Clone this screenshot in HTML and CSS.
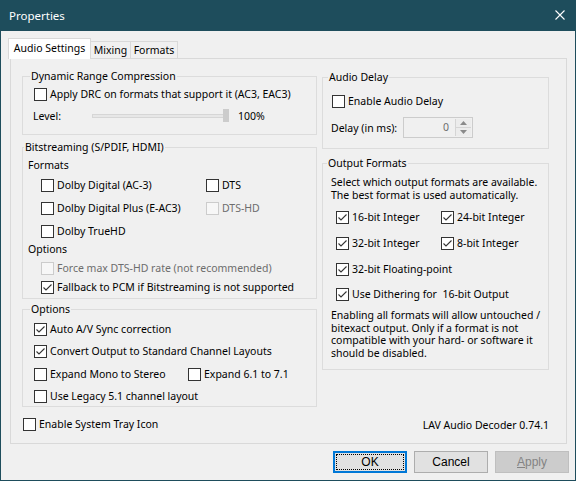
FILE: index.html
```html
<!DOCTYPE html>
<html>
<head>
<meta charset="utf-8">
<link rel="stylesheet" href="styles.css">
</head>
<body>
<div class="window">
  <div class="titlebar">
    <span class="title">Properties</span>
    <svg class="close" width="10" height="10" viewBox="0 0 10 10"><path d="M0.5 0.5 L9.5 9.5 M9.5 0.5 L0.5 9.5" stroke="#ffffff" stroke-width="1.1" fill="none"/></svg>
  </div>
  <div class="client">
    <div class="tabs">
      <div class="tab sel">Audio Settings</div>
      <div class="tab t-mix">Mixing</div>
      <div class="tab t-fmt">Formats</div>
    </div>
    <div class="panel">
      <div class="col left">
        <fieldset class="grp drc">
          <legend>Dynamic Range Compression</legend>
          <label class="cb r-drc"><span class="box"></span>Apply DRC on formats that support it (AC3, EAC3)</label>
          <div class="level">
            <span class="lvl-label">Level:</span>
            <div class="slider"><div class="track"></div><div class="thumb"></div></div>
            <span class="lvl-val">100%</span>
          </div>
        </fieldset>

        <fieldset class="grp bits">
          <legend>Bitstreaming (S/PDIF, HDMI)</legend>
          <div class="sub sub-fmt">Formats</div>
          <div class="pair p1">
            <label class="cb c1"><span class="box"></span>Dolby Digital (AC-3)</label>
            <label class="cb"><span class="box"></span>DTS</label>
          </div>
          <div class="pair p2">
            <label class="cb c1"><span class="box"></span>Dolby Digital Plus (E-AC3)</label>
            <label class="cb dis"><span class="box"></span>DTS-HD</label>
          </div>
          <div class="pair p3">
            <label class="cb c1"><span class="box"></span>Dolby TrueHD</label>
          </div>
          <div class="sub sub-opt">Options</div>
          <label class="cb dis ind r-force"><span class="box"></span>Force max DTS-HD rate (not recommended)</label>
          <label class="cb ind r-fall"><span class="box"><svg width="11" height="11" viewBox="0 0 11 11"><path d="M1.5 5.5 L4 8 L9.5 2.5" stroke="#333" stroke-width="1.1" fill="none"/></svg></span>Fallback to PCM if Bitstreaming is not supported</label>
        </fieldset>

        <fieldset class="grp opts">
          <legend>Options</legend>
          <label class="cb r-o1"><span class="box"><svg width="11" height="11" viewBox="0 0 11 11"><path d="M1.5 5.5 L4 8 L9.5 2.5" stroke="#333" stroke-width="1.1" fill="none"/></svg></span>Auto A/V Sync correction</label>
          <label class="cb r-o2"><span class="box"><svg width="11" height="11" viewBox="0 0 11 11"><path d="M1.5 5.5 L4 8 L9.5 2.5" stroke="#333" stroke-width="1.1" fill="none"/></svg></span>Convert Output to Standard Channel Layouts</label>
          <div class="pair r-o3">
            <label class="cb c2"><span class="box"></span>Expand Mono to Stereo</label>
            <label class="cb"><span class="box"></span>Expand 6.1 to 7.1</label>
          </div>
          <label class="cb r-o4"><span class="box"></span>Use Legacy 5.1 channel layout</label>
        </fieldset>

        <label class="cb tray"><span class="box"></span>Enable System Tray Icon</label>
      </div>

      <div class="col right">
        <fieldset class="grp delay">
          <legend>Audio Delay</legend>
          <label class="cb r-ad"><span class="box"></span>Enable Audio Delay</label>
          <div class="delayrow">
            <span class="dl-label">Delay (in ms):</span>
            <div class="spin">
              <span class="spin-val">0</span>
              <div class="spin-btns">
                <div class="sb"><svg width="7" height="4" viewBox="0 0 7 4"><path d="M0 4 L3.5 0 L7 4 Z" fill="#8a8a8a"/></svg></div>
                <div class="sb"><svg width="7" height="4" viewBox="0 0 7 4"><path d="M0 0 L3.5 4 L7 0 Z" fill="#8a8a8a"/></svg></div>
              </div>
            </div>
          </div>
        </fieldset>

        <fieldset class="grp outfmt">
          <legend>Output Formats</legend>
          <p class="desc">Select which output formats are available.<br>The best format is used automatically.</p>
          <div class="pair q1">
            <label class="cb c3"><span class="box"><svg width="11" height="11" viewBox="0 0 11 11"><path d="M1.5 5.5 L4 8 L9.5 2.5" stroke="#333" stroke-width="1.1" fill="none"/></svg></span>16-bit Integer</label>
            <label class="cb"><span class="box"><svg width="11" height="11" viewBox="0 0 11 11"><path d="M1.5 5.5 L4 8 L9.5 2.5" stroke="#333" stroke-width="1.1" fill="none"/></svg></span>24-bit Integer</label>
          </div>
          <div class="pair q2">
            <label class="cb c3"><span class="box"><svg width="11" height="11" viewBox="0 0 11 11"><path d="M1.5 5.5 L4 8 L9.5 2.5" stroke="#333" stroke-width="1.1" fill="none"/></svg></span>32-bit Integer</label>
            <label class="cb"><span class="box"><svg width="11" height="11" viewBox="0 0 11 11"><path d="M1.5 5.5 L4 8 L9.5 2.5" stroke="#333" stroke-width="1.1" fill="none"/></svg></span>8-bit Integer</label>
          </div>
          <label class="cb q3"><span class="box"><svg width="11" height="11" viewBox="0 0 11 11"><path d="M1.5 5.5 L4 8 L9.5 2.5" stroke="#333" stroke-width="1.1" fill="none"/></svg></span>32-bit Floating-point</label>
          <label class="cb q4"><span class="box"><svg width="11" height="11" viewBox="0 0 11 11"><path d="M1.5 5.5 L4 8 L9.5 2.5" stroke="#333" stroke-width="1.1" fill="none"/></svg></span>Use Dithering for&nbsp; 16-bit Output</label>
          <p class="note">Enabling all formats will allow untouched /<br>bitexact output. Only if a format is not<br>compatible with your hard- or software it<br>should be disabled.</p>
        </fieldset>

        <div class="version">LAV Audio Decoder 0.74.1</div>
      </div>
    </div>
    <div class="buttons">
      <button class="btn ok"><span class="focus">OK</span></button>
      <button class="btn">Cancel</button>
      <button class="btn apply" disabled><u>A</u>pply</button>
    </div>
  </div>
</div>
</body>
</html>
```

FILE: styles.css
```css
* { box-sizing: border-box; }
html, body { margin: 0; padding: 0; background: #f0f0f0; }
body {
  font-family: "Noto Sans", "Liberation Sans", sans-serif;
  font-size: 10.5px;
  color: #000;
}
.window {
  width: 576px;
  height: 481px;
  border: 1px solid #1e4d5c;
  border-top: none;
  background: #f0f0f0;
  display: flex;
  flex-direction: column;
}
.titlebar {
  height: 31px;
  background: #1e4d5c;
  display: flex;
  align-items: center;
  justify-content: space-between;
  padding: 0 10px 1px 8px;
  color: #fff;
}
.title { font-size: 11.5px; }
.close { display: block; }

.client { padding-top: 7px; }
.tabs {
  display: flex;
  align-items: flex-end;
  margin-left: 7px;
  height: 20px;
  position: relative;
  z-index: 1;
}
.tab {
  height: 17px;
  border: 1px solid #d9d9d9;
  border-bottom: none;
  border-left: none;
  background: #f0f0f0;
  display: flex;
  align-items: center;
  justify-content: center;
  line-height: 15px;
  font-size: 10.5px;
}
.tab.sel {
  height: 21px;
  margin-bottom: -1px;
  border-left: 1px solid #d9d9d9;
  background: #ffffff;
  width: 83px;
  padding-bottom: 1px;
}
.t-mix { width: 40px; }
.t-fmt { width: 47px; }

.panel {
  margin-left: 9px;
  width: 557px;
  height: 386px;
  border: 1px solid #d9d9d9;
  display: flex;
  gap: 5px;
  padding: 10px 0 0 11px;
}
.col { display: flex; flex-direction: column; }
.left { width: 295px; }
.right { width: 227px; }

.grp {
  margin: 0;
  padding: 0 0 0 11px;
  border: 1px solid #dcdcdc;
  min-width: 0;
  display: flex;
  flex-direction: column;
  align-items: flex-start;
}
.grp legend {
  margin-left: -4px;
  padding: 0 1px;
  line-height: 15px;
}

.cb {
  display: flex;
  align-items: center;
  height: 15px;
  line-height: 15px;
  white-space: nowrap;
}
.box {
  width: 13px;
  height: 13px;
  border: 1px solid #333333;
  background: #ffffff;
  margin-right: 3px;
  flex: none;
  display: flex;
  align-items: center;
  justify-content: center;
}
.box svg { display: block; }
.cb.dis { color: #6d6d6d; }
.cb.dis .box { border-color: #cccccc; background: #f7f7f7; }

.pair { display: flex; height: 15px; }

/* DRC */
.drc { height: 66px; }
.r-drc { margin-top: 3px; }
.level {
  display: flex;
  align-items: center;
  height: 15px;
  margin-top: 6px;
  margin-left: -1px;
}
.lvl-label { width: 59px; }
.slider { position: relative; width: 137px; height: 15px; }
.track {
  position: absolute;
  left: 0; right: 0; top: 6px;
  height: 4px;
  background: #e7e7e7;
  border: 1px solid #d6d6d6;
}
.thumb {
  position: absolute;
  left: 131px; top: 1px;
  width: 6px; height: 13px;
  background: #cccccc;
}
.lvl-val { margin-left: 9px; }

/* Bitstreaming */
.bits { height: 159px; margin-top: 5px; padding-left: 5px; }
.sub { line-height: 15px; height: 15px; }
.sub-fmt { margin-top: 3px; }
.p1 { margin-top: 5px; margin-left: 13px; }
.p2 { margin-top: 8px; margin-left: 13px; }
.p3 { margin-top: 8px; margin-left: 13px; }
.c1 { width: 165px; }
.sub-opt { margin-top: 3px; }
.ind { margin-left: 13px; }
.r-force { margin-top: 4px; }
.r-fall { margin-top: 4px; }

/* Options */
.opts { height: 105px; margin-top: 3px; }
.r-o1 { margin-top: 5px; }
.r-o2 { margin-top: 7px; }
.r-o3 { margin-top: 8px; }
.r-o4 { margin-top: 7px; }
.c2 { width: 154px; }

.tray { margin-top: 10px; margin-left: 1px; }

/* Right column */
.delay { height: 79px; margin-top: 1px; padding-left: 9px; }
.r-ad { margin-top: 9px; }
.delayrow {
  display: flex;
  align-items: center;
  margin-top: 8px;
  margin-left: -1px;
}
.dl-label { width: 72px; }
.spin {
  width: 70px;
  height: 21px;
  border: 1px solid #cccccc;
  background: #f0f0f0;
  display: flex;
  align-items: center;
  justify-content: flex-end;
  padding: 1px;
}
.spin-val { color: #6d6d6d; margin-right: 6px; line-height: 15px; }
.spin-btns {
  width: 16px;
  height: 100%;
  display: flex;
  flex-direction: column;
  border-left: 1px solid #d5d5d5;
}
.sb {
  flex: 1;
  display: flex;
  align-items: center;
  justify-content: center;
  background: #ececec;
}
.sb + .sb { border-top: 1px solid #d5d5d5; }

.outfmt { height: 214px; margin-top: 7px; padding-left: 8px; }
.desc, .note { margin: 0; line-height: 12.5px; white-space: nowrap; }
.desc { margin-top: 5px; }
.q1 { margin-top: 9px; margin-left: 5px; }
.q2 { margin-top: 11px; margin-left: 5px; }
.q3 { margin-top: 11px; margin-left: 5px; }
.q4 { margin-top: 10px; margin-left: 5px; }
.c3 { width: 105px; }
.note { margin-top: 7px; }

.version {
  margin-top: 48px;
  line-height: 15px;
  text-align: right;
}

/* Buttons */
.buttons {
  display: flex;
  justify-content: flex-end;
  gap: 7px;
  margin-top: 7px;
  padding-right: 6px;
}
.btn {
  width: 74px;
  height: 22px;
  margin: 0;
  padding: 0;
  font-family: "Liberation Sans", Arial, sans-serif;
  font-size: 12px;
  color: #000;
  background: #e1e1e1;
  border: 1px solid #adadad;
  display: flex;
  align-items: center;
  justify-content: center;
}
.btn.ok {
  border: 2px solid #0078d7;
  padding: 1px;
}
.focus {
  flex: 1;
  align-self: stretch;
  display: flex;
  align-items: center;
  justify-content: center;
  border: 1px dotted #000;
}
.btn.apply {
  background: #cccccc;
  border-color: #bfbfbf;
  color: #838383;
}
```
